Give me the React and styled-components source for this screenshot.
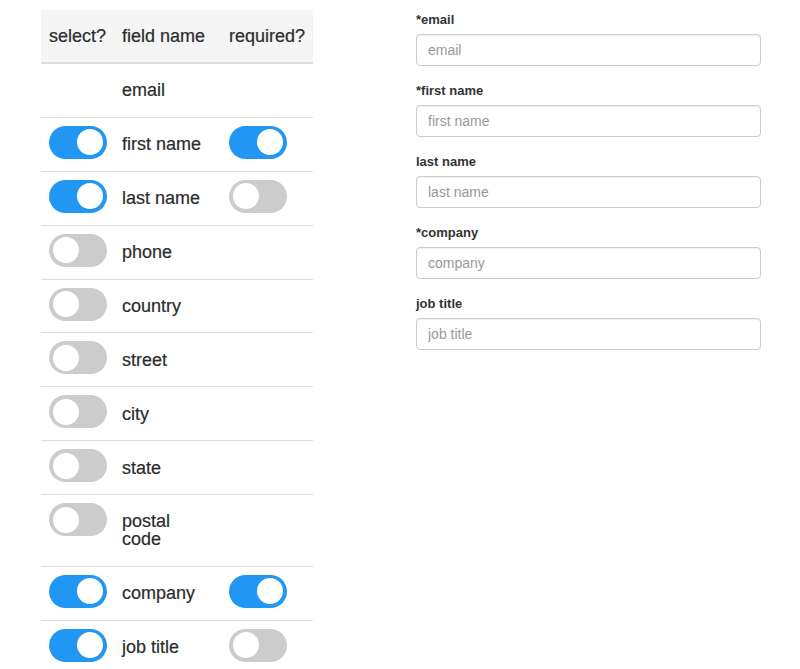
import React, { useState } from 'react'
import styled, { createGlobalStyle } from 'styled-components'

const Global = createGlobalStyle`
body{margin:0;background:#fff;font-family:"Liberation Sans",Arial,sans-serif;color:#333;}
*{box-sizing:border-box;}
`
const Page = styled.div`
display:flex;align-items:flex-start;gap:103px;padding:10px 0 0 41px;
`
const Table = styled.div`width:272px;`
const Row = styled.div`
display:grid;grid-template-columns:73px 107px 92px;
border-bottom:${p => p.$head ? '2px solid #ddd' : '1px solid #ddd'};
background:${p => p.$head ? '#f5f5f5' : 'transparent'};
font-size:18px;line-height:18px;color:#2b2b2b;-webkit-text-stroke:0.2px #2b2b2b;
`
const HeadCell = styled.div`
height:52px;padding:0 8px;display:flex;align-items:center;white-space:nowrap;
`
const ToggleCell = styled.div`padding:8px 0 0 8px;`
const NameCell = styled.div`padding:17.45px 11px 17.45px 8px;align-self:center;`

const Switch = styled.button`
position:relative;width:58px;height:33px;border:none;padding:0;border-radius:17px;cursor:pointer;
background:${p => p.$on ? '#2196f3' : '#ccc'};
&::after{
content:"";position:absolute;top:3.5px;left:${p => p.$on ? '28px' : '4px'};
width:26px;height:26px;border-radius:50%;background:#fff;
}
`
const Form = styled.div`width:345px;`
const Group = styled.div`margin-bottom:15px;`
const Label = styled.label`
display:block;font-size:13px;font-weight:bold;line-height:19px;margin-bottom:5px;color:#333;
`
const Input = styled.input`
display:block;width:100%;height:32px;border:1px solid #ccc;border-radius:4px;padding:0 11px;
font-family:"Liberation Sans",Arial,sans-serif;font-size:14px;color:#555;
box-shadow:inset 0 1px 1px rgba(0,0,0,.06);outline:none;
&::placeholder{color:#999;}
`

const initial = [
  { name: 'email', fixed: true },
  { name: 'first name', sel: true, req: true },
  { name: 'last name', sel: true, req: false },
  { name: 'phone', sel: false },
  { name: 'country', sel: false },
  { name: 'street', sel: false },
  { name: 'city', sel: false },
  { name: 'state', sel: false },
  { name: 'postal code', sel: false },
  { name: 'company', sel: true, req: true },
  { name: 'job title', sel: true, req: false },
]

export default function App() {
  const [fields, setFields] = useState(initial)
  const flip = (i, key) => setFields(f => f.map((x, j) => j === i ? { ...x, [key]: !x[key] } : x))
  const shown = fields.filter(f => f.fixed || f.sel)
  return (
    <>
      <Global />
      <Page>
        <Table>
          <Row $head>
            <HeadCell>select?</HeadCell>
            <HeadCell>field name</HeadCell>
            <HeadCell>required?</HeadCell>
          </Row>
          {fields.map((f, i) => (
            <Row key={f.name}>
              <ToggleCell>{!f.fixed && <Switch $on={f.sel} onClick={() => flip(i, 'sel')} />}</ToggleCell>
              <NameCell>{f.name}</NameCell>
              <ToggleCell>{f.sel && <Switch $on={f.req} onClick={() => flip(i, 'req')} />}</ToggleCell>
            </Row>
          ))}
        </Table>
        <Form>
          {shown.map(f => (
            <Group key={f.name}>
              <Label>{(f.fixed || f.req) ? '*' : ''}{f.name}</Label>
              <Input placeholder={f.name} />
            </Group>
          ))}
        </Form>
      </Page>
    </>
  )
}
